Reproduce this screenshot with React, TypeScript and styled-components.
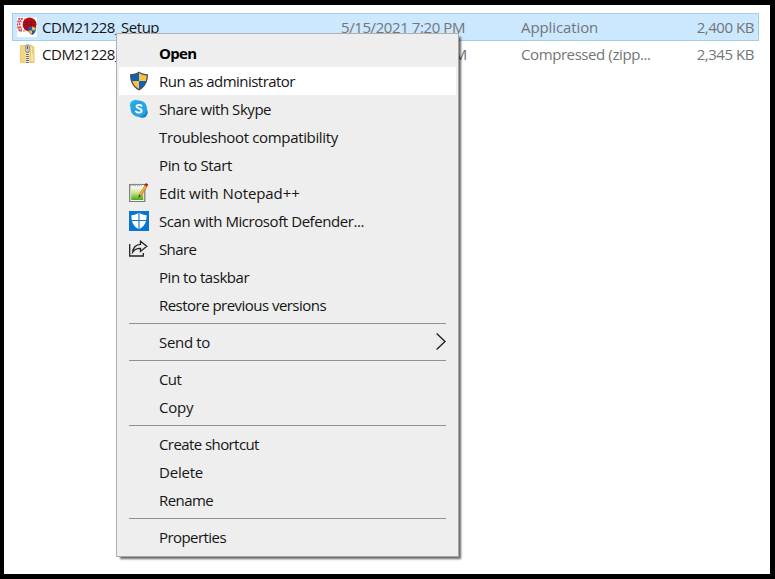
import React from "react";
import styled, { createGlobalStyle, css } from "styled-components";

const GlobalStyle = createGlobalStyle`
  * { box-sizing: border-box; }
  body { margin: 0; background: #000; overflow: hidden; }
`;

const Window = styled.main`
  position: relative;
  width: 775px;
  height: 579px;
  padding: 8px 11px 0 8px;
  border: solid #000;
  border-width: 5px 5px 5px 4px;
  background: #fff;
  font-family: "Open Sans", "Noto Sans", sans-serif;
  font-size: 15px;
  color: #151515;
`;

const FileList = styled.section`
  display: flex;
  flex-direction: column;
`;

const FileRow = styled.div<{ $selected?: boolean }>`
  display: grid;
  grid-template-columns: 22px 299px 180px 140px 1fr;
  align-items: center;
  width: 747px;
  height: ${(p) => (p.$selected ? 28 : 26)}px;
  padding: 0 4px 0 7px;
  border: 1px solid ${(p) => (p.$selected ? "#a5cde6" : "transparent")};
  background: ${(p) => (p.$selected ? "#cce8ff" : "transparent")};
  line-height: ${(p) => (p.$selected ? 26 : 24)}px;
  white-space: nowrap;
  svg { margin-left: -3px; }
`;

const Label = styled.span<{ $tracking: number }>`
  letter-spacing: ${(p) => p.$tracking}px;
  white-space: nowrap;
`;

const Detail = styled(Label)<{ $end?: boolean }>`
  color: #727679;
  ${(p) => p.$end && css`text-align: right;`}
`;

const Menu = styled.nav`
  position: absolute;
  left: 112px;
  top: 28px;
  width: 343px;
  height: 524px;
  padding: 5px 2px;
  border: 1px solid #b0b0b0;
  border-right-color: #a6a6a6;
  border-bottom-color: #a6a6a6;
  background: #eee;
  box-shadow: 3px 3px 2px -1px rgba(0, 0, 0, 0.6);
`;

const MenuItem = styled.div<{ $hover?: boolean; $bold?: boolean }>`
  display: grid;
  grid-template-columns: 30px 1fr auto;
  align-items: center;
  height: 28px;
  padding: 0 10px;
  line-height: 28px;
  background: ${(p) => (p.$hover ? "#fff" : "transparent")};
  font-weight: ${(p) => (p.$bold ? 700 : 400)};
  color: ${(p) => (p.$bold ? "#000" : "#151515")};
`;

const IconSlot = styled.span`
  display: flex;
  align-items: center;
`;

const Separator = styled.hr`
  height: 1px;
  margin: 4px 10px;
  border: 0;
  background: #919191;
`;

const ShieldQuarters = () => (
  <>
    <path d="M10 .5C7.5 2.5 4.500 3.200 1 3.200C1 10.500 3.500 16 10 19.500C16.500 16 19 10.500 19 3.200C15.500 3.200 12.500 2.500 10 .5Z" fill="#48525a" />
    <path d="M9.900 2C7.500 3.600 5.200 4.200 2.400 4.400C2.400 6.600 2.700 8.300 3.200 9.900H9.900Z" fill="#0b62b8" />
    <path d="M10 2C12.500 3.600 14.800 4.200 17.600 4.400C17.600 6.600 17.300 8.300 16.800 10H10Z" fill="#fcc044" />
    <path d="M3.200 10H10V17.900C6.300 15.900 4.200 13.300 3.200 10Z" fill="#fcc044" />
    <path d="M16.800 10H10V17.900C13.700 15.900 15.800 13.300 16.800 10Z" fill="#0b62b8" />
  </>
);

const AdminIcon = () => (
  <svg width="20" height="20" viewBox="0 0 20 20"><ShieldQuarters /></svg>
);

const SetupIcon = () => (
  <svg width="20" height="20" viewBox="0 0 20 20">
    <path d="M0 0H20V20H0Z" fill="#fff" />
    <circle cx="12.500" cy="7.500" r="7" fill="#b30f18" />
    <path d="M7 5H19M6 8H19M7 11H19M10 2V13M14 1V14" stroke="#8b0710" strokeWidth=".6" />
    <path d="M7.500 1.500C4 4 4 11 7 14" fill="none" stroke="#fff" strokeWidth="1" />
    <path d="M5.500 1C1.500 4 2 11 5.500 14.500M3 1C-.5 5 0 11 3.500 15" fill="none" stroke="#cf3540" strokeWidth="1.400" strokeDasharray="2 1" />
    <path d="M1 2H8M1 5H5M1 11H5M3 14H9" stroke="#d24b55" strokeWidth="1" strokeDasharray="2 1" />
    <g transform="translate(10.500 8.600) scale(.46 .48)"><ShieldQuarters /></g>
  </svg>
);

const ZipIcon = () => (
  <svg width="20" height="20" viewBox="0 0 20 20">
    <path d="M3.500 1.500H14.500L17 3V18.500H3.500Z" fill="#f5d678" stroke="#e5c468" strokeWidth=".8" />
    <path d="M13.500 1.500V18H16.800V11L15.500 9.500V3Z" fill="#fbe7a4" stroke="#dfbd62" strokeWidth=".6" />
    <path d="M10.500 8V19" stroke="#ece7d5" strokeWidth="4" />
    <path d="M10.500 8V19" stroke="#64605a" strokeWidth="2.600" strokeDasharray="1 1" />
    <rect x="8.700" y=".7" width="3.600" height="7.600" rx="1.300" fill="#c9cccd" stroke="#868a8c" strokeWidth=".8" />
    <path d="M10.500 2V5" stroke="#555b5f" strokeWidth="1" />
  </svg>
);

const SkypeIcon = () => (
  <svg width="20" height="20" viewBox="0 0 20 20">
    <circle cx="6.300" cy="6.200" r="5.500" fill="#2dbce9" />
    <circle cx="13.200" cy="13.300" r="5.500" fill="#137dc7" />
    <circle cx="9.800" cy="9.700" r="8.300" fill="#27a3df" />
    <path d="M12.600 6.800C11.600 5.500 7.500 5.400 7.500 7.600C7.500 9.900 12.600 8.900 12.600 11.700C12.600 14.200 8.100 14 7 12.500" fill="none" stroke="#fff" strokeWidth="1.900" strokeLinecap="round" />
  </svg>
);

const NotepadIcon = () => (
  <svg width="20" height="20" viewBox="0 0 20 20">
    <defs>
      <linearGradient id="page" x1="0" y1="0" x2="0" y2="1">
        <stop offset="0" stopColor="#f4f6e4" /><stop offset=".4" stopColor="#c9e58c" /><stop offset="1" stopColor="#46ab12" />
      </linearGradient>
    </defs>
    <path d="M.7 1.500H15.800V18.500H.7Z" fill="#f6f6f1" stroke="#77796f" strokeWidth="1.200" />
    <path d="M2.200 5H14.300V17H2.200Z" fill="url(#page)" />
    <path d="M1.500 2H13" stroke="#999" strokeWidth="2.600" strokeDasharray="1 1.200" />
    <path d="M17.300 2.500L11 12.500" stroke="#b17a2a" strokeWidth="3" />
    <path d="M16.800 3.100L11.300 11.800" stroke="#f5b13c" strokeWidth="1.900" />
    <path d="M16.200 1L18.700 2.500" stroke="#a51f2c" strokeWidth="2.500" />
    <path d="M9.800 11.800L9.400 14.800L12.200 13.200Z" fill="#55452b" />
  </svg>
);

const DefenderIcon = () => (
  <svg width="20" height="20" viewBox="0 0 20 20">
    <path d="M0 0H20V20H0Z" fill="#0876d1" />
    <path d="M10 1.800C7.700 3.500 5.300 4.100 2.400 4.200C2.400 10.600 4 15 10 18.300C16 15 17.600 10.600 17.600 4.200C14.700 4.100 12.300 3.500 10 1.800Z" fill="#fff" />
    <path d="M10 1V19M2 9.500H18" stroke="#0876d1" strokeWidth="1.100" />
  </svg>
);

const ShareIcon = () => (
  <svg width="20" height="20" viewBox="0 0 20 20" fill="none" stroke="#222" strokeWidth="1.300">
    <path d="M.7 5V17H14.300V14" />
    <path d="M11.500 2.200L17.800 7.300L11.500 12.400V9.400C8 9.200 5.700 10.300 3.700 13.100C4.200 8.400 6.500 5.500 11.500 5.300Z" />
  </svg>
);

const Chevron = () => (
  <svg width="10" height="18" viewBox="0 0 10 18" fill="none" stroke="#1b1b1b" strokeWidth="1.300">
    <path d="M.6 0.500L9 8.500L.6 16.500" />
  </svg>
);

type Entry = {
  label: string;
  tracking: number;
  icon?: React.ReactNode;
  bold?: boolean;
  hover?: boolean;
  submenu?: boolean;
};

const groups: Entry[][] = [
  [
    { label: "Open", tracking: -0.7, bold: true },
    { label: "Run as administrator", tracking: -0.53, icon: <AdminIcon />, hover: true },
    { label: "Share with Skype", tracking: -0.45, icon: <SkypeIcon /> },
    { label: "Troubleshoot compatibility", tracking: -0.34 },
    { label: "Pin to Start", tracking: -0.38 },
    { label: "Edit with Notepad++", tracking: -0.09, icon: <NotepadIcon /> },
    { label: "Scan with Microsoft Defender...", tracking: -0.43, icon: <DefenderIcon /> },
    { label: "Share", tracking: -0.62, icon: <ShareIcon /> },
    { label: "Pin to taskbar", tracking: -0.46 },
    { label: "Restore previous versions", tracking: -0.53 },
  ],
  [{ label: "Send to", tracking: -0.32, submenu: true }],
  [
    { label: "Cut", tracking: -0.6 },
    { label: "Copy", tracking: -0.25 },
  ],
  [
    { label: "Create shortcut", tracking: -0.58 },
    { label: "Delete", tracking: -0.2 },
    { label: "Rename", tracking: -0.58 },
  ],
  [{ label: "Properties", tracking: -0.56 }],
];

export default function App() {
  return (
    <>
      <GlobalStyle />
      <Window>
        <FileList>
          <FileRow $selected>
            <SetupIcon />
            <Label $tracking={-0.47}>CDM21228_Setup</Label>
            <Detail $tracking={-0.41}>5/15/2021 7:20 PM</Detail>
            <Detail $tracking={-0.1}>Application</Detail>
            <Detail $tracking={-0.45} $end>2,400 KB</Detail>
          </FileRow>
          <FileRow>
            <ZipIcon />
            <Label $tracking={-0.47}>CDM21228_Setup</Label>
            <Detail $tracking={-0.3}>5/15/2021 7:19 PM</Detail>
            <Detail $tracking={-0.41}>Compressed (zipp...</Detail>
            <Detail $tracking={-0.45} $end>2,345 KB</Detail>
          </FileRow>
        </FileList>
        <Menu>
          {groups.map((group, index) => (
            <React.Fragment key={index}>
              {index > 0 && <Separator />}
              {group.map((entry) => (
                <MenuItem key={entry.label} $hover={entry.hover} $bold={entry.bold}>
                  <IconSlot>{entry.icon}</IconSlot>
                  <Label $tracking={entry.tracking}>{entry.label}</Label>
                  {entry.submenu && <Chevron />}
                </MenuItem>
              ))}
            </React.Fragment>
          ))}
        </Menu>
      </Window>
    </>
  );
}
